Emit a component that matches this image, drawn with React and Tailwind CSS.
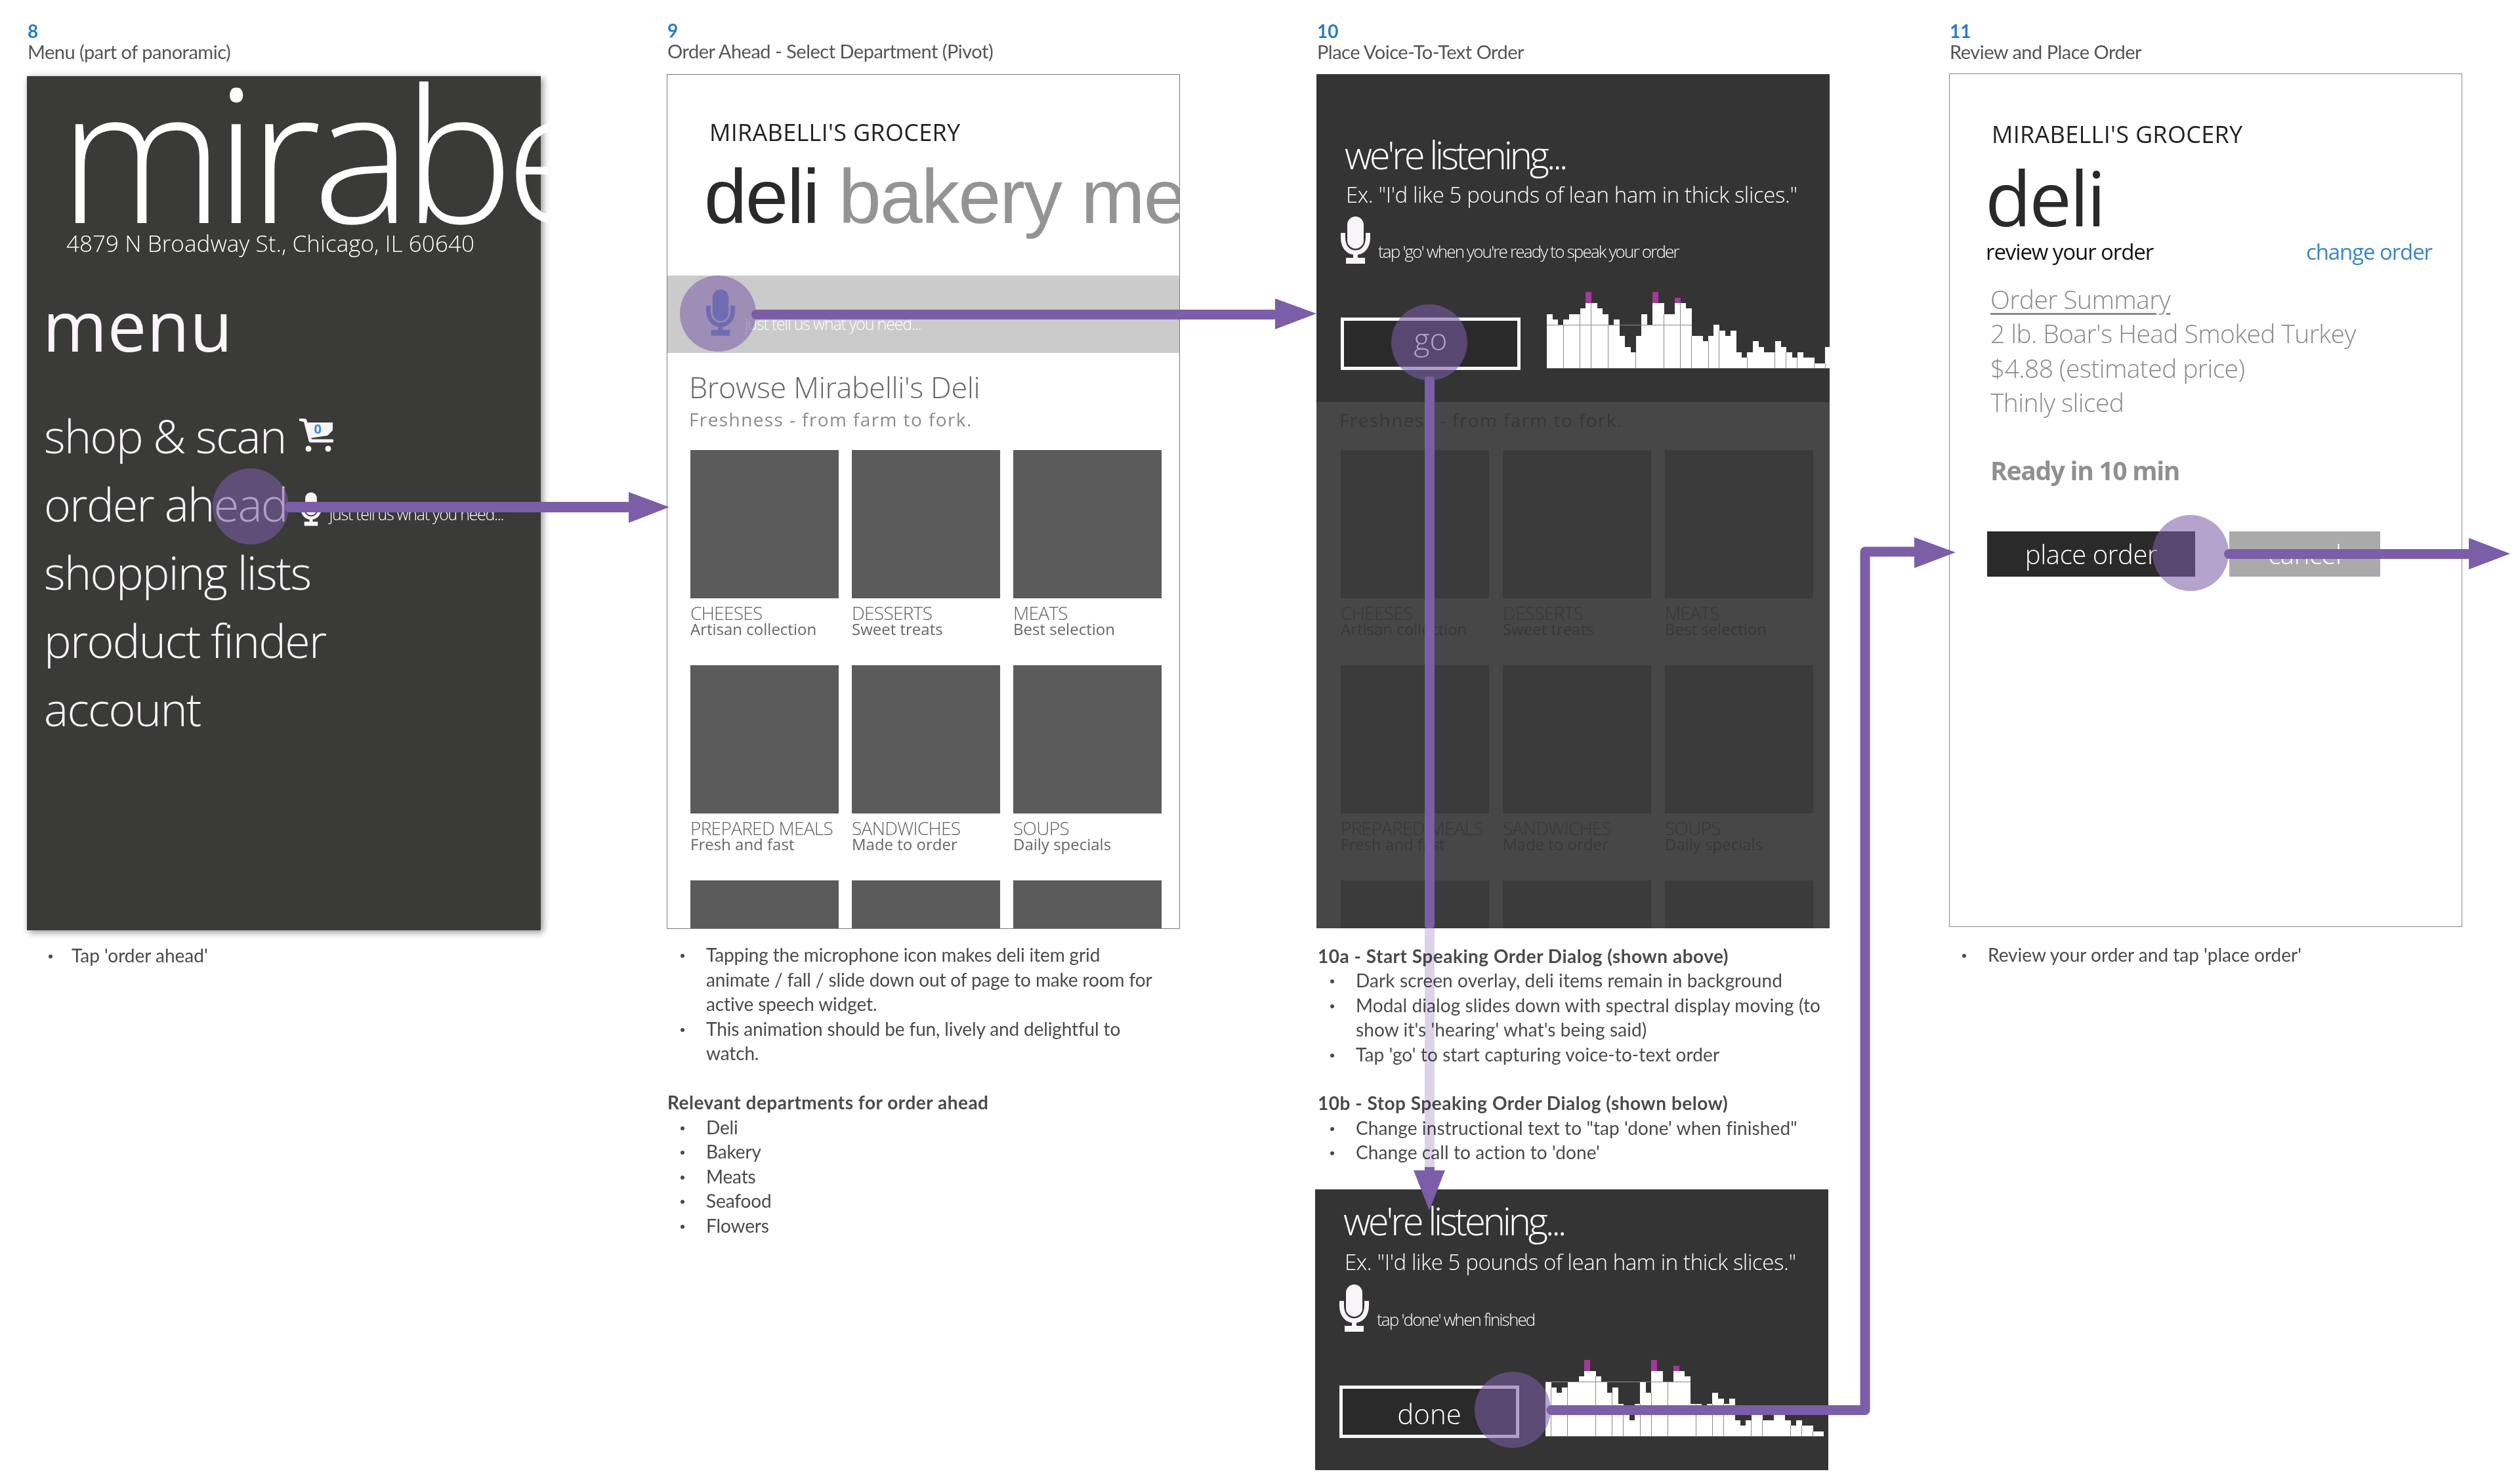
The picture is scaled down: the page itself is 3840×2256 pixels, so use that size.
import React from 'react';

const PURPLE = '#7b5ea7';
const HEIGHTS = [10,9,8,9,10,10,11,12,12,11,10,8,9,6,4,3,6,10,8,12,12,10,10,12,12,11,6,6,5,6,8,7,6,7,3,2,3,5,4,3,3,5,4,3,2,3,2,2,1,1,4];
const PEAKS = { 7: 2, 19: 2, 23: 1 };

const deliTiles = [
  ['CHEESES', 'Artisan collection'],
  ['DESSERTS', 'Sweet treats'],
  ['MEATS', 'Best selection'],
  ['PREPARED MEALS', 'Fresh and fast'],
  ['SANDWICHES', 'Made to order'],
  ['SOUPS', 'Daily specials'],
];

const segoe = { fontFamily: '"Open Sans", sans-serif' };

function Mic({ className, color = '#f9f4f8' }) {
  return (
    <svg viewBox="0 0 45 72" className={className} fill="none">
      <rect x="10" y="0" width="25" height="49" rx="12.5" fill={color} />
      <path d="M3.5 25 V32 C3.5 47 12 55 22.5 55 C33 55 41.5 47 41.5 32 V25" stroke={color} strokeWidth="7" />
      <rect x="19" y="55" width="7" height="10" fill={color} />
      <rect x="8" y="63" width="29" height="9" fill={color} />
    </svg>
  );
}

function Cart() {
  return (
    <div className="relative w-[52px] h-[52px] shrink-0">
      <svg viewBox="0 0 52 52" className="w-full h-full">
        <path d="M1 1 L9 3 L17 34 L50 34" fill="none" stroke="#f9f4f8" strokeWidth="5" strokeLinejoin="round" strokeLinecap="round" />
        <path d="M9 6 H51 V18 L43 26 L16 30 Z" fill="#f9f4f8" />
        <circle cx="14" cy="46" r="4.5" fill="#f9f4f8" />
        <circle cx="44" cy="46" r="4.5" fill="#f9f4f8" />
      </svg>
      <span className="absolute left-[23px] top-[4px] text-[20px] leading-[24px] font-bold tracking-normal text-[#3d8fd8]" style={{ fontFamily: '"Open Sans", sans-serif' }}>0</span>
    </div>
  );
}

function Spectrum({ data, lines, gridAt, gridCols }) {
  const ux = 8.483;
  const uy = 8.33;
  const h = 117;
  return (
    <svg width={data.length * ux} height={h} className="shrink-0 block mb-[2px]" shapeRendering="crispEdges">
      {data.map((v, i) => (
        <rect key={i} x={i * ux} y={h - v * uy} width={ux + 0.4} height={v * uy} fill="#ffffff" />
      ))}
      {Object.entries(PEAKS).map(([i, v]) => (
        <rect key={i} x={i * ux} y={h - (HEIGHTS[i] + v) * uy} width={ux} height={v * uy} fill="#a13a98" />
      ))}
      {lines.map(i => (
        <line key={i} x1={i * ux} x2={i * ux} y1={h - Math.min(data[i], data[i - 1]) * uy} y2={h} stroke="#8a8a8a" strokeWidth="1" />
      ))}
      <line x1="0" x2={gridCols * ux} y1={h - gridAt * uy} y2={h - gridAt * uy} stroke="#8a8a8a" strokeWidth="1" />
      <line x1="0" x2={data.length * ux} y1={h - 0.5} y2={h - 0.5} stroke="#777" strokeWidth="1" />
    </svg>
  );
}

function ListeningDialog({ tip, action, variant }) {
  const first = variant === 'go';
  return (
    <div className={first ? 'h-[500px] bg-[#343434] pl-[37px] pt-[90px] overflow-hidden' : 'h-[428px] w-[782px] -ml-[2px] bg-[#343434] pl-[37px] pt-[15px] overflow-hidden'}>
      <div className="ml-[6px] text-[58px] leading-[66px] font-[350] tracking-[-4.2px] text-white whitespace-nowrap" style={segoe}>we're listening...</div>
      <div className={first ? 'mt-[8px] ml-[8px] text-[33px] leading-[40px] font-light tracking-[-0.4px] text-white whitespace-nowrap' : 'mt-[10px] ml-[8px] text-[33px] leading-[40px] font-light tracking-[-0.4px] text-white whitespace-nowrap'} style={segoe}>
        Ex. "I'd like 5 pounds of lean ham in thick slices."
      </div>
      <div className={first ? 'mt-[13px] flex items-start gap-[12px]' : 'mt-[14px] flex items-start gap-[12px]'}>
        <Mic className="w-[45px] h-[72px] shrink-0" />
        <div className="mt-[38px] text-[26px] leading-[30px] font-light tracking-[-1.83px] text-white whitespace-nowrap" style={segoe}>{tip}</div>
      </div>
      <div className="mt-[82px] flex items-end h-[80px] gap-[40px]">
        <div className={first ? 'w-[274px] h-[80px] shrink-0 border-[5px] border-[#f6f6f6] bg-[#2a2a2a] flex items-center justify-center pb-[16px] text-[46px] font-light text-white' : 'w-[274px] h-[80px] shrink-0 border-[5px] border-[#f6f6f6] bg-[#2a2a2a] flex items-center justify-center pt-[6px] text-[42px] font-light text-white'} style={segoe}>{action}</div>
        <Spectrum
          data={first ? HEIGHTS : HEIGHTS.slice(0, -1)}
          lines={first ? [3,6,8,11,16,21,24,26,29,31,36,41,43,45,48,50] : [1,4,9,12,14,17,19,22,27,30,32,37,39,44,46,48]}
          gridAt={first ? 8 : 10}
          gridCols={26}
        />
      </div>
    </div>
  );
}

function DeliGrid({ dim }) {
  const rows = [...deliTiles, ['', ''], ['', ''], ['', '']];
  return (
    <div className={dim ? 'mt-[28px] grid grid-cols-[226px_226px_226px] gap-x-[21px] gap-y-[43px]' : 'mt-[31px] grid grid-cols-[226px_226px_226px] gap-x-[20px] gap-y-[43px]'}>
      {rows.map(([name, sub], i) => (
        <div key={i} className="w-[226px]">
          <div className={dim ? 'h-[226px] bg-[#3b3b3b]' : 'h-[226px] bg-[#5a5b5a]'} />
          <div className={dim ? 'mt-[8px] text-[28px] leading-[28px] font-[350] tracking-[-0.7px] text-[#383838] whitespace-nowrap' : 'mt-[8px] text-[28px] leading-[28px] font-[350] tracking-[-0.7px] text-[#5f5f5f] whitespace-nowrap'} style={segoe}>{name}</div>
          <div className={dim ? '-mt-[2px] text-[24px] leading-[25px] text-[#383838] whitespace-nowrap' : '-mt-[2px] text-[24px] leading-[25px] text-[#666666] whitespace-nowrap'} style={segoe}>{sub}</div>
        </div>
      ))}
    </div>
  );
}

function Header({ num, title }) {
  return (
    <div>
      <div className="text-[28px] leading-[30px] font-bold text-[#2a7cc7] pl-[1px]">{num}</div>
      <div className="mt-[2px] text-[29px] leading-[30px] tracking-[-0.5px] text-[#555555] pl-[1px] whitespace-nowrap">{title}</div>
    </div>
  );
}

function Bullets({ items, textLeft, dotLeft }) {
  return (
    <div>
      {items.map((lines, i) => (
        <div key={i} className="relative" style={{ paddingLeft: textLeft }}>
          <span className="absolute top-[17px] w-[6px] h-[6px] rounded-full bg-[#4a4a4a]" style={{ left: dotLeft }} />
          {lines.map((l, j) => <div key={j} className="whitespace-nowrap">{l}</div>)}
        </div>
      ))}
    </div>
  );
}

function Overlay() {
  const circle = (cx, cy, r = 58) => <circle cx={cx} cy={cy} r={r} fill={PURPLE} fillOpacity="0.57" />;
  return (
    <svg width="3840" height="2256" className="absolute left-0 top-0 pointer-events-none">
      {/* order ahead -> department */}
      {circle(382, 772)}
      <rect x="433" y="765" width="530" height="16" rx="8" fill={PURPLE} />
      <polygon points="958,750 1020,773 958,797" fill={PURPLE} />
      {/* mic -> dialog */}
      {circle(1094, 478)}
      <rect x="1145" y="472" width="803" height="15" rx="7.5" fill={PURPLE} />
      <polygon points="1943,455 2006,478 1943,502" fill={PURPLE} />
      {/* go -> done */}
      {circle(2178, 522)}
      <rect x="2171" y="574" width="15" height="841" rx="4" fill={PURPLE} />
      <rect x="2171" y="1415" width="15" height="364" fill="#dcd3e9" className="mix-blend-multiply" />
      <rect x="2171" y="1779" width="15" height="8" fill={PURPLE} />
      <polygon points="2154,1784 2202,1784 2178,1845" fill={PURPLE} />
      {/* done -> review */}
      {circle(2305, 2149)}
      <path d="M2364 2149.5 H2842 V841 H2925" fill="none" stroke={PURPLE} strokeWidth="15" strokeLinecap="round" strokeLinejoin="round" />
      <polygon points="2917,819 2980,842 2917,866" fill={PURPLE} />
      {/* place order -> next */}
      {circle(3338, 843)}
      <rect x="3389" y="837" width="378" height="15" rx="7.5" fill={PURPLE} />
      <polygon points="3762,820 3825,844 3762,868" fill={PURPLE} />
    </svg>
  );
}

export default function App() {
  return (
    <div className="relative w-[3840px] h-[2256px] overflow-hidden bg-white flex items-start" style={{ fontFamily: 'Lato, sans-serif' }}>
      {/* 8 - menu */}
      <div className="ml-[41px] w-[783px] shrink-0">
        <div className="h-[116px] pt-[32px]"><Header num="8" title="Menu (part of panoramic)" /></div>
        <div className="flow-root h-[1302px] bg-[#3a3a39] shadow-[3px_3px_10px_rgba(0,0,0,0.45)] text-white" style={segoe}>
          <div className="-mt-[28px] ml-[49px] w-[745px] overflow-hidden text-[284px] leading-[284px] font-light tracking-[-13px] whitespace-nowrap relative">mirabe</div>
          <div className="-mt-[21px] ml-[60px] text-[35px] leading-[40px] font-light tracking-[0.05px] whitespace-nowrap relative">4879 N Broadway St., Chicago, IL 60640</div>
          <div className="mt-[49px] ml-[24px] text-[106px] leading-[110px] font-normal tracking-[0.5px] text-[#faf5f9]">menu</div>
          <div className="mt-[62px] ml-[26px] text-[70px] leading-[104px] font-[350] tracking-[-1.7px] text-[#faf5f9]">
            <div className="flex items-center gap-[20px] whitespace-nowrap">shop &amp; scan <Cart /></div>
            <div className="flex items-center gap-[20px] whitespace-nowrap">
              order ahead
              <div className="flex items-end gap-[12px] mt-[16px]">
                <Mic className="w-[32px] h-[52px] shrink-0" />
                <span className="mb-[4px] text-[25px] leading-[30px] tracking-[-1.3px] text-white">just tell us what you need...</span>
              </div>
            </div>
            <div>shopping lists</div>
            <div>product finder</div>
            <div>account</div>
          </div>
        </div>
        <div className="mt-[20px] text-[28px] leading-[37px] text-[#4a4a4a]">
          <Bullets textLeft="68px" dotLeft="33px" items={[["Tap 'order ahead'"]]} />
        </div>
      </div>

      {/* 9 - department pivot */}
      <div className="ml-[192px] w-[782px] shrink-0">
        <div className="h-[113px] pt-[31px]"><Header num="9" title="Order Ahead - Select Department (Pivot)" /></div>
        <div className="h-[1303px] border border-[#777777] bg-white overflow-hidden">
          <div className="pt-[68px] pl-[64px] text-[36px] leading-[40px] font-normal tracking-[0.3px] text-[#222222] whitespace-nowrap" style={segoe}>MIRABELLI'S GROCERY</div>
          <div className="mt-[13px] pl-[56px] text-[117px] leading-[130px] tracking-[-2px] text-[#2a2a2a] whitespace-nowrap" style={{ fontFamily: '"Liberation Sans", sans-serif' }}>
            deli <span className="text-[#949494]">bakery me</span>
          </div>
          <div className="mt-[55px] h-[118px] bg-[#cbcbcb] pl-[118px] pt-[61px] text-[25px] leading-[24px] font-light tracking-[-1.2px] text-white" style={segoe}>just tell us what you need...</div>
          <div className="pl-[33px]" style={segoe}>
            <div className="mt-[26px] text-[45px] leading-[52px] font-light tracking-[-0.4px] text-[#666666] whitespace-nowrap">Browse Mirabelli's Deli</div>
            <div className="mt-[5px] text-[28px] leading-[36px] tracking-[1.4px] text-[#8b8b8b] whitespace-nowrap">Freshness - from farm to fork.</div>
            <div className="-mt-[2px] pl-[2px]"><DeliGrid /></div>
          </div>
        </div>
        <div className="mt-[21px] text-[28px] leading-[37.5px] tracking-[-0.13px] text-[#4a4a4a]">
          <Bullets textLeft="60px" dotLeft="21px" items={[
            ['Tapping the microphone icon makes deli item grid', 'animate / fall / slide down out of page to make room for', 'active speech widget.'],
            ['This animation should be fun, lively and delightful to', 'watch.'],
          ]} />
          <div className="mt-[37.5px] font-bold tracking-[0.5px] pl-[1px]">Relevant departments for order ahead</div>
          <Bullets textLeft="60px" dotLeft="21px" items={[['Deli'], ['Bakery'], ['Meats'], ['Seafood'], ['Flowers']]} />
        </div>
      </div>

      {/* 10 - voice to text */}
      <div className="ml-[208px] w-[782px] shrink-0">
        <div className="h-[113px] pt-[32px]"><Header num="10" title="Place Voice-To-Text Order" /></div>
        <div className="h-[1302px] bg-[#474747] overflow-hidden">
          <ListeningDialog variant="go" action="go" tip="tap 'go' when you're ready to speak your order" />
          <div className="pl-[35px] pt-[9px]" style={segoe}>
            <div className="text-[28px] leading-[36px] tracking-[1.4px] text-[#383838] whitespace-nowrap">Freshness - from farm to fork.</div>
            <div className="pl-[2px]"><DeliGrid dim /></div>
          </div>
        </div>
        <div className="mt-[24px] text-[28px] leading-[37.4px] tracking-[0.1px] text-[#4a4a4a]">
          <div className="font-bold tracking-[0.5px] pl-[2px]">10a - Start Speaking Order Dialog (shown above)</div>
          <Bullets textLeft="60px" dotLeft="21px" items={[
            ['Dark screen overlay, deli items remain in background'],
            ['Modal dialog slides down with spectral display moving (to', "show it's 'hearing' what's being said)"],
            ["Tap 'go' to start capturing voice-to-text order"],
          ]} />
          <div className="mt-[37.4px] font-bold tracking-[0.5px] pl-[2px]">10b - Stop Speaking Order Dialog (shown below)</div>
          <Bullets textLeft="60px" dotLeft="21px" items={[
            ['Change instructional text to "tap \'done\' when finished"'],
            ["Change call to action to 'done'"],
          ]} />
        </div>
        <div className="mt-[37px]">
          <ListeningDialog variant="done" action="done" tip="tap 'done' when finished" />
        </div>
      </div>

      {/* 11 - review */}
      <div className="ml-[182px] w-[782px] shrink-0">
        <div className="h-[112px] pt-[32px]"><Header num="11" title="Review and Place Order" /></div>
        <div className="h-[1301px] border border-[#888888] bg-white" style={segoe}>
          <div className="pt-[72px] pl-[64px] text-[36px] leading-[40px] font-normal tracking-[0.3px] text-[#222222] whitespace-nowrap">MIRABELLI'S GROCERY</div>
          <div className="mt-[11px] pl-[54px] text-[115px] leading-[130px] font-normal tracking-[-3px] text-[#2a2a2a]">deli</div>
          <div className="-mt-[4px] pl-[55px] pr-[45px] flex justify-between text-[33px] leading-[44px] font-normal tracking-[-1.1px]">
            <span className="text-[#111111]">review your order</span>
            <span className="text-[#3a85c9]">change order</span>
          </div>
          <div className="mt-[24px] pl-[62px] text-[39px] leading-[52.3px] font-light tracking-[-0.6px] text-[#8a8a8a] whitespace-nowrap">
            <div className="underline underline-offset-[6px]">Order Summary</div>
            <div>2 lb. Boar's Head Smoked Turkey</div>
            <div>$4.88 (estimated price)</div>
            <div>Thinly sliced</div>
          </div>
          <div className="mt-[52px] pl-[62px] text-[39px] leading-[52px] font-bold tracking-[-1.3px] text-[#909090]">Ready in 10 min</div>
          <div className="mt-[67px] ml-[57px] flex gap-[52px] text-[40px] font-light tracking-[-0.4px] text-white">
            <div className="w-[317px] h-[69px] bg-[#2a2a2a] flex items-center justify-center">place order</div>
            <div className="w-[230px] h-[69px] bg-[#aaaaaa] flex items-center justify-center">cancel</div>
          </div>
        </div>
        <div className="mt-[24px] text-[28px] leading-[37px] text-[#4a4a4a]">
          <Bullets textLeft="59px" dotLeft="20px" items={[["Review your order and tap 'place order'"]]} />
        </div>
      </div>

      <Mic className="absolute left-[1076px] top-[441px] w-[44px] h-[71px]" color="#5f80bd" />
      <Overlay />
    </div>
  );
}
